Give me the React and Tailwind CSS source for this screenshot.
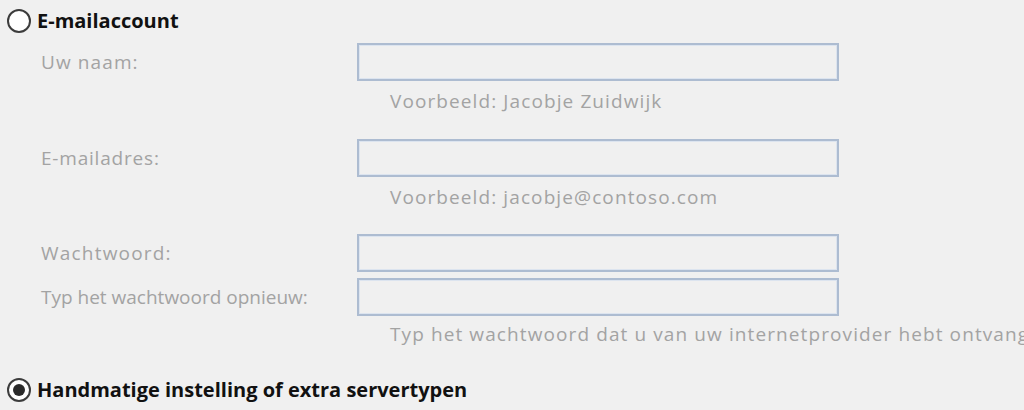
import React from 'react';

const font = { fontFamily: '"Open Sans", "Noto Sans", "Liberation Sans", sans-serif' };

function Radio({ checked }) {
    return (
        <span className="w-[24px] h-[24px] rounded-full border-2 border-[#3c3c3c] bg-white flex items-center justify-center shrink-0">
            {checked && <span className="w-[12px] h-[12px] rounded-full bg-[#2a2a2a]" />}
        </span>
    );
}

function Field({ label, tracking }) {
    return (
        <div className="flex items-center h-[38px]">
            <span className={`w-[357px] pl-[41px] text-[19px] text-[#a3a3a3] whitespace-nowrap ${tracking}`}>{label}</span>
            <div className="w-[482px] h-[38px] border-2 border-[#adbcd1] shadow-[inset_0_0_0_1px_#dce4ef] bg-[#f0f0f0]" />
        </div>
    );
}

function Hint({ children }) {
    return (
        <div className="pl-[390px] h-[20px] flex items-center text-[19px] tracking-[1.1px] text-[#a3a3a3] whitespace-nowrap">
            {children}
        </div>
    );
}

export default function App() {
    return (
        <div className="w-[1024px] h-[410px] bg-[#f0f0f0] overflow-hidden" style={font}>
            {/* E-mailaccount */}
            <div className="flex items-center gap-[6px] pl-[7px] pt-[9px] h-[33px]">
                <Radio />
                <span className="text-[20px] font-bold text-[#111]">E-mailaccount</span>
            </div>
            <div className="mt-[10px]">
                <Field label="Uw naam:" tracking="tracking-[1.1px]" />
            </div>
            <div className="mt-[10px]">
                <Hint>Voorbeeld: Jacobje Zuidwijk</Hint>
            </div>
            <div className="mt-[28px]">
                <Field label="E-mailadres:" tracking="tracking-[0.8px]" />
            </div>
            <div className="mt-[10px]">
                <Hint>Voorbeeld: jacobje@contoso.com</Hint>
            </div>
            <div className="mt-[27px]">
                <Field label="Wachtwoord:" tracking="tracking-[1.2px]" />
            </div>
            <div className="mt-[6px]">
                <Field label="Typ het wachtwoord opnieuw:" tracking="tracking-normal" />
            </div>
            <div className="mt-[8px]">
                <Hint>Typ het wachtwoord dat u van uw internetprovider hebt ontvangen.</Hint>
            </div>
            {/* Handmatige instelling */}
            <div className="flex items-center gap-[6px] pl-[7px] mt-[33px] h-[26px]">
                <Radio checked />
                <span className="text-[20px] font-bold text-[#111]">Handmatige instelling of extra servertypen</span>
            </div>
        </div>
    );
}
